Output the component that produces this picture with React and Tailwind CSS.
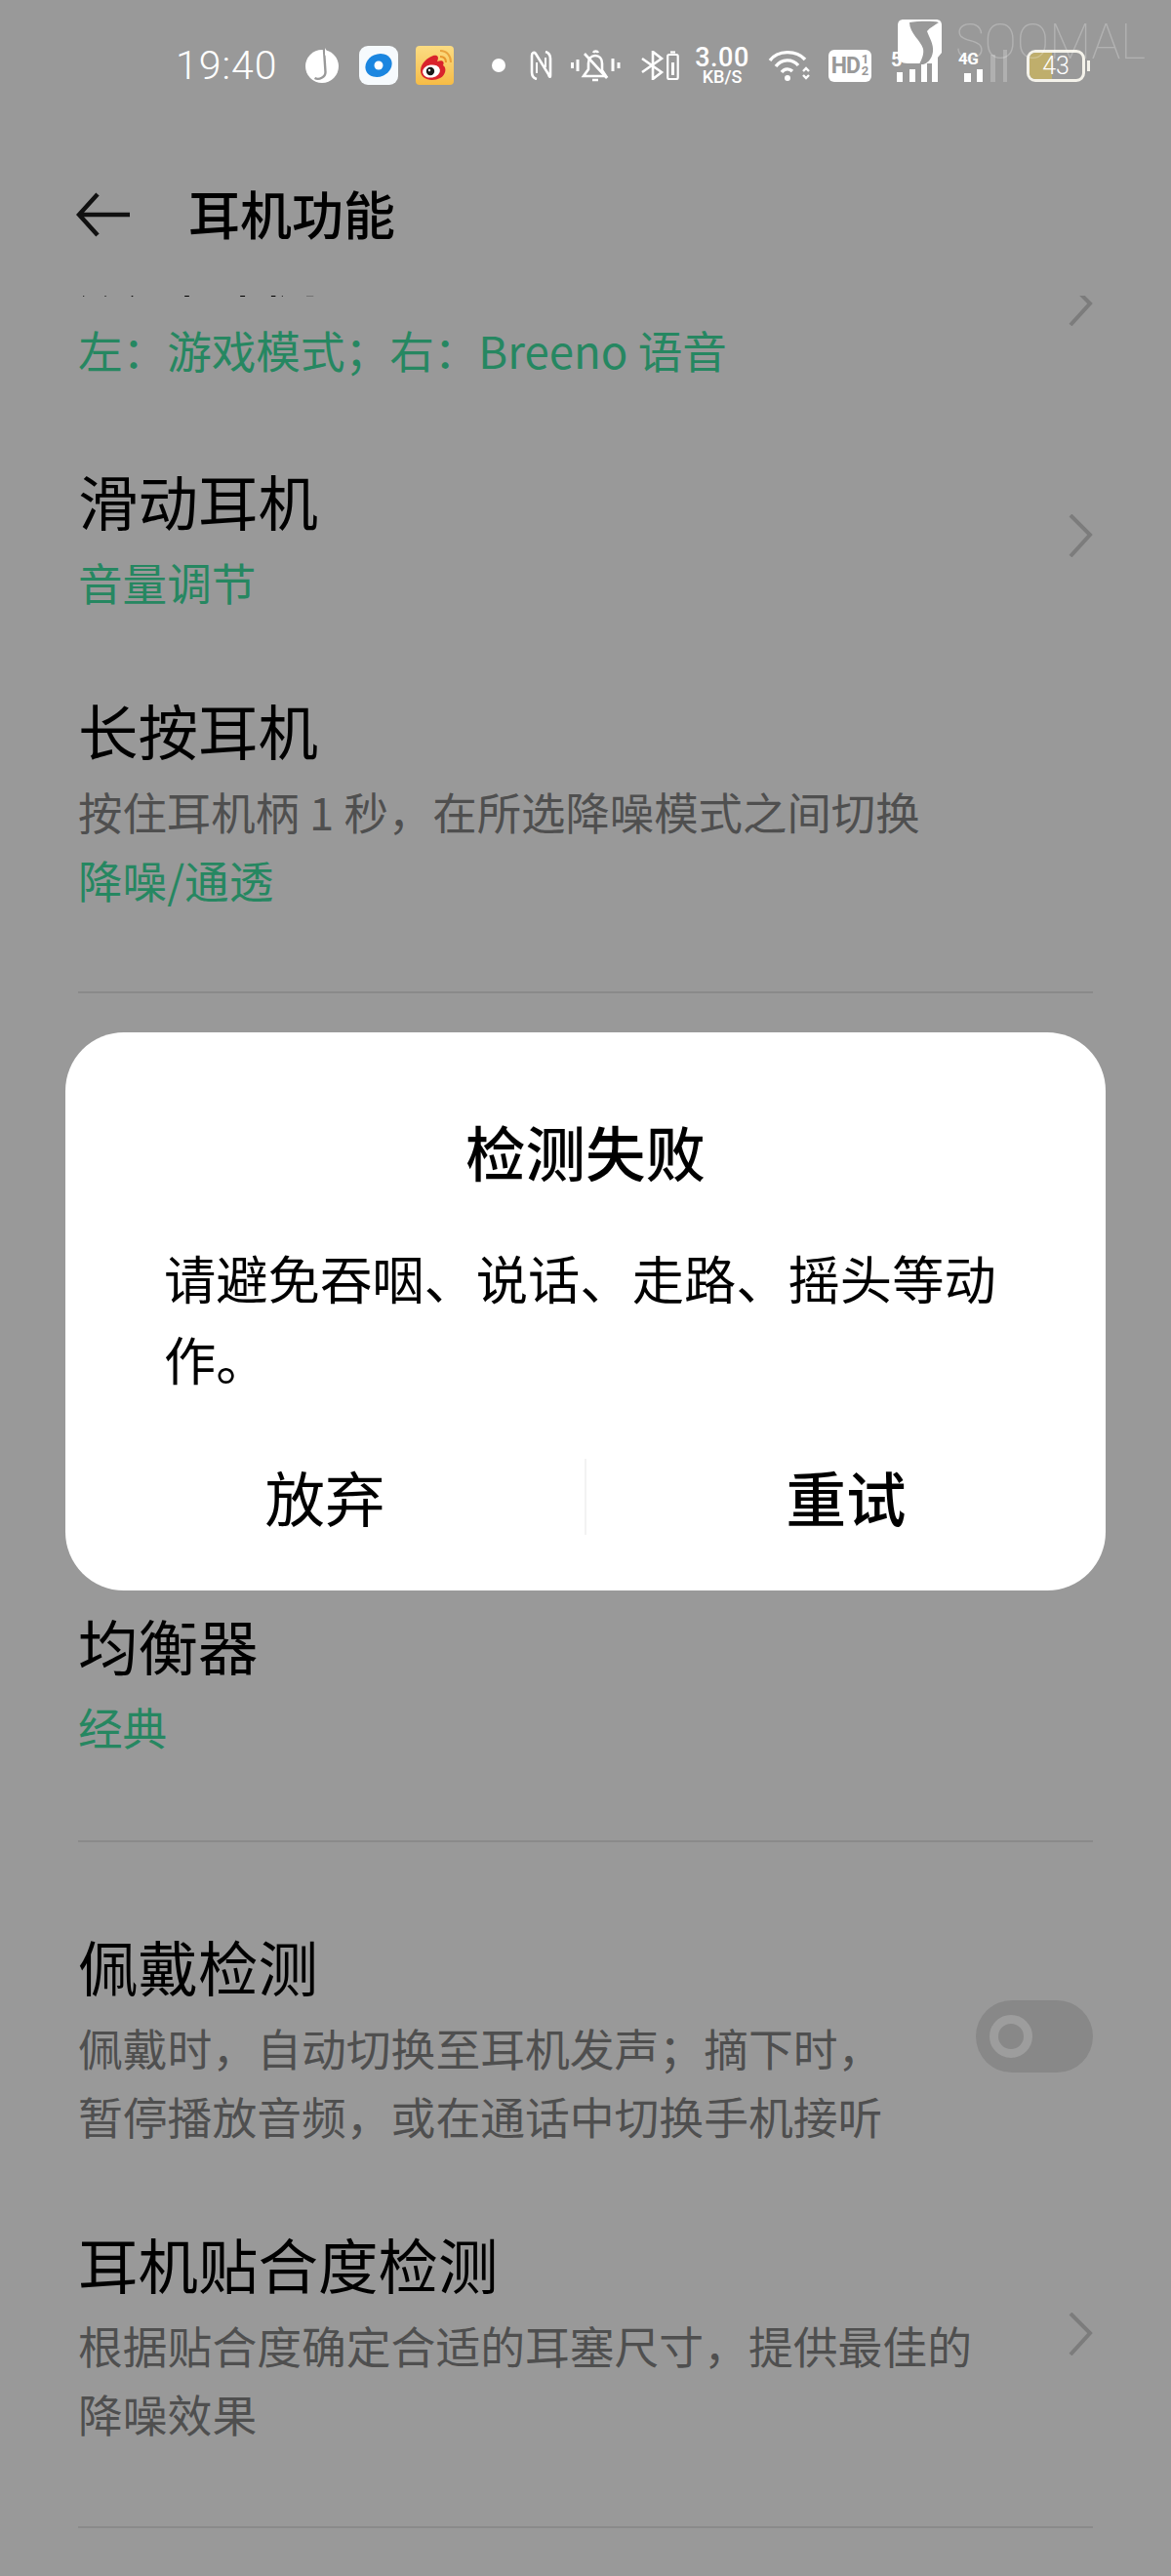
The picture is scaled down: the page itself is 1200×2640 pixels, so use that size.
import { Fragment } from 'react';

const CJK = "font-['Noto_Sans_CJK_SC','Noto_Sans',sans-serif]";

function Chevron({ className = '' }) {
  return (
    <svg viewBox="0 0 26 44" className={`w-[26px] h-[44px] shrink-0 ${className}`} fill="none" stroke="#7c7c7c" strokeWidth="4">
      <path d="M3 1 L23 21 L3 43" />
    </svg>
  );
}

function Title({ children }) {
  return <div className="text-[61.5px] leading-[82px] text-black">{children}</div>;
}

function Green({ children, className = 'mt-[7px]' }) {
  return <div className={`text-[45.6px] leading-[70px] text-[#268761] ${className}`}>{children}</div>;
}

function Sub({ lines, size = 'text-[45.8px]' }) {
  return (
    <div className={`mt-[7px] leading-[70px] text-[#4f4f4f] whitespace-nowrap ${size}`}>
      {lines.map((l, i) => (
        <Fragment key={i}>
          {l}
          {i < lines.length - 1 && <br />}
        </Fragment>
      ))}
    </div>
  );
}

function Divider({ className = '' }) {
  return <div className={`h-[2px] bg-[#8a8a8a] ${className}`} />;
}

function QQMusic() {
  return (
    <svg viewBox="0 0 36 36" className="w-[36px] h-[36px] shrink-0 ml-[32px]">
      <circle cx="18" cy="19" r="17" fill="#fff" />
      <path d="M20 2 L21.5 25 C21.5 30 15 33.5 10.5 31" fill="none" stroke="#999" strokeWidth="2.4" />
      <path d="M21 0 C23 5 28 7 28 12 C25 9 22 9 21 7 Z" fill="#fff" />
    </svg>
  );
}

function DiscTile() {
  return (
    <div className="w-[40px] h-[40px] shrink-0 ml-[20px] rounded-[9px] bg-[#f6fafd] flex items-center justify-center">
      <svg viewBox="0 0 30 30" className="w-[30px] h-[30px]">
        <ellipse cx="15" cy="15" rx="14" ry="11.5" transform="rotate(-25 15 15)" fill="#1b86e0" />
        <circle cx="15" cy="15" r="4.5" fill="#fff" />
      </svg>
    </div>
  );
}

function WeiboTile() {
  return (
    <div className="w-[39px] h-[40px] shrink-0 ml-[18px] rounded-[4px] bg-gradient-to-b from-[#fbdc82] to-[#f6bc45]">
      <svg viewBox="0 0 39 40" className="w-[39px] h-[40px]">
        <path d="M5 25 C5 18 12 12 18 10 C23 9 24 12 22 16 C27 14 30 16 28 20 C32 22 31 30 25 33 C17 37 5 35 5 25 Z" fill="#d9232c" />
        <ellipse cx="16" cy="26" rx="9" ry="6.5" transform="rotate(-10 16 26)" fill="#fff" />
        <circle cx="15" cy="26" r="4.2" fill="#1a1a1a" />
        <circle cx="14" cy="25" r="1.2" fill="#fff" />
        <path d="M25 11 C29 11 31 13 31 17" fill="none" stroke="#e9962c" strokeWidth="2" />
        <path d="M25 5 C32 5 36 10 36 17" fill="none" stroke="#e9a33c" strokeWidth="2" />
      </svg>
    </div>
  );
}

function NfcIcon() {
  return (
    <svg viewBox="0 0 23 30" className="w-[23px] h-[30px] shrink-0 ml-[25px]" fill="none" stroke="#fff" strokeWidth="2.6">
      <path d="M7 29 C3 28 2 26 2 22 V5 C2 2 4 1 6 3 L19 24 C20 27 21 28 21 25 V8 C21 4 19 2 16 1" />
      <path d="M7 23 V12 M16 7 V17" strokeWidth="2" />
    </svg>
  );
}

function MutedBell() {
  return (
    <svg viewBox="0 0 51 33" className="w-[51px] h-[33px] shrink-0 ml-[19px]" fill="none" stroke="#fff" strokeWidth="2.6">
      <path d="M1.5 13 V19 M7 10 V22 M43 9 V22 M49 13 V19" strokeWidth="3" />
      <path d="M13 27 H36 L32 21 V14 C32 9 29 6 25 6 C21 6 18 9 18 14 V20 Z" />
      <path d="M23 3 C24 1 27 1 28 3 M14 4 L37 29 M22 31 H28" />
    </svg>
  );
}

function BluetoothBattery() {
  return (
    <svg viewBox="0 0 39 30" className="w-[39px] h-[30px] shrink-0 ml-[21px]" fill="none" stroke="#fff" strokeWidth="2.6">
      <path d="M1 8 L21 22 L12 29 V1 L21 8 L1 22" />
      <rect x="27.2" y="4" width="10.5" height="25" rx="1.5" strokeWidth="2.2" />
      <path d="M30 1.5 H35" strokeWidth="2.2" />
      <path d="M32.5 12 V25" strokeWidth="3" />
    </svg>
  );
}

function Speed() {
  return (
    <div className="w-[56px] ml-[16px] shrink-0 flex flex-col items-center font-['Roboto',sans-serif] text-white font-medium">
      <div className="text-[27px] leading-[24px] tracking-[0.5px]">3.00</div>
      <div className="text-[18px] leading-[16px]">KB/S</div>
    </div>
  );
}

function Wifi() {
  return (
    <svg viewBox="0 0 43 32" className="w-[43px] h-[32px] shrink-0 ml-[19px]" fill="none" stroke="#fff" strokeWidth="3.4">
      <path d="M2 11 C10 0 29 0 38 10" />
      <path d="M8 17 C14 9 25 9 31 16" />
      <path d="M14 23 C17 19 22 19 25 22" />
      <circle cx="20" cy="29" r="3" fill="#fff" stroke="none" />
      <path d="M36 22 L39 19 L42 22 M36 26 L39 29 L42 26" strokeWidth="2.4" />
    </svg>
  );
}

function HdTile() {
  return (
    <div className="w-[44px] h-[33px] shrink-0 ml-[19px] rounded-[6px] bg-white flex items-center justify-center gap-[1px] font-['Roboto',sans-serif] font-bold text-[#999]">
      <span className="text-[23px] leading-none tracking-[-1px]">HD</span>
      <span className="flex flex-col text-[13px] leading-[12px] pl-[1px]">
        <span>1</span>
        <span>2</span>
      </span>
    </div>
  );
}

function SignalFive() {
  return (
    <div className="relative w-[48px] h-[33px] shrink-0 ml-[20px] font-['Roboto',sans-serif] font-bold text-white">
      <svg viewBox="0 0 48 33" className="w-[48px] h-[33px]" fill="#fff">
        <rect x="6" y="23" width="6" height="10" />
        <rect x="19" y="20" width="6" height="13" />
        <rect x="31" y="6" width="6" height="27" />
        <rect x="42" y="6" width="6" height="27" />
      </svg>
      <span className="absolute left-0 top-[1px] text-[20px] leading-[18px]">5</span>
    </div>
  );
}

function SignalFour() {
  return (
    <div className="relative w-[50px] h-[33px] shrink-0 ml-[21px] font-['Roboto',sans-serif] font-bold text-white">
      <svg viewBox="0 0 50 33" className="w-[50px] h-[33px]">
        <rect x="6" y="24" width="7" height="9" fill="#fff" />
        <rect x="19" y="20" width="6" height="13" fill="#fff" />
        <rect x="33" y="5" width="5" height="28" fill="#b0b0b0" />
        <rect x="46" y="0" width="5" height="33" fill="#b0b0b0" />
      </svg>
      <span className="absolute left-0 top-[2px] text-[17px] leading-[15px] tracking-[-0.5px]">4G</span>
    </div>
  );
}

function Battery() {
  return (
    <div className="flex items-center shrink-0 ml-[20px]">
      <div className="relative w-[60px] h-[33px] rounded-[9px] border-[3px] border-[#f4f2ea] overflow-hidden">
        <div className="h-full w-[23px] bg-[#bfae6c]" />
        <span className="absolute inset-0 flex items-center justify-center text-[25px] leading-none font-light text-white font-['Roboto',sans-serif]">43</span>
      </div>
      <div className="w-[3px] h-[11px] ml-[2px] bg-[#f4f2ea]" />
    </div>
  );
}

function Watermark() {
  return (
    <div className="absolute left-[920px] top-[20px] flex items-center">
      <svg viewBox="0 0 45 46" className="w-[45px] h-[46px]">
        <path d="M6 0 H39 C43 0 45 2 45 6 V34 L36 45 H10 C4 45 0 42 0 36 V6 C0 2 2 0 6 0 Z" fill="#fff" />
        <path d="M12 3 C20 2 34 1 42 3 C38 6 33 8 30 12 C32 18 37 25 36 33 C35 41 30 45 26 46 L22 46 C25 40 27 35 26 30 C24 22 12 14 12 3 Z" fill="#999" />
      </svg>
      <span className="ml-[14px] text-[50px] leading-[46px] font-thin text-white/25 font-['Roboto',sans-serif]">SOOMAL</span>
    </div>
  );
}

function StatusBar() {
  return (
    <div className="h-[134px] pl-[180px] flex items-center">
      <div className="w-[100px] shrink-0 text-[41px] leading-none font-light text-white font-['Roboto',sans-serif] tracking-[1px]">19:40</div>
      <QQMusic />
      <DiscTile />
      <WeiboTile />
      <div className="w-[14px] h-[14px] shrink-0 ml-[39px] rounded-full bg-white" />
      <NfcIcon />
      <MutedBell />
      <BluetoothBattery />
      <Speed />
      <Wifi />
      <HdTile />
      <SignalFive />
      <SignalFour />
      <Battery />
    </div>
  );
}

function Dialog() {
  return (
    <div className="absolute left-[67px] top-[1058px] w-[1066px] h-[572px] rounded-[60px] bg-white pt-[86px]">
      <div className="text-center text-[61.5px] leading-[72px] font-medium text-black">检测失败</div>
      <div className="mt-[51px] pl-[101px] pr-[103px] text-[53.3px] leading-[83px] text-black">
        请避免吞咽、说话、走路、摇头等动作。
      </div>
      <div className="mt-[62px] h-[78px] flex items-center text-[61.5px] text-black">
        <div className="flex-1 text-center">放弃</div>
        <div className="w-[2px] h-full bg-[#f3f3f3]" />
        <div className="flex-1 text-center font-medium">重试</div>
      </div>
    </div>
  );
}

export default function App() {
  return (
    <div className={`relative w-[1200px] h-[2640px] overflow-hidden bg-[#999999] ${CJK}`}>
      <StatusBar />

      {/* Header */}
      <div className="h-[169px] pt-[3px] pl-[78px] flex items-center">
        <svg viewBox="0 0 56 46" className="w-[56px] h-[46px] shrink-0" fill="none" stroke="#111" strokeWidth="4.5">
          <path d="M22 2 L3 23 L22 44 M3 23 H55" />
        </svg>
        <h1 className="ml-[59px] -mt-[4px] text-[53px] leading-none font-medium text-black">耳机功能</h1>
      </div>

      {/* Settings list, scrolled so the first row is cut off under the header */}
      <div className="h-[2337px] overflow-hidden px-[80px]">
        <div className="-mt-[71px] flex items-center justify-between">
          <div>
            <Title>双击耳机</Title>
            <Green className="mt-[9px]">左：游戏模式；右：Breeno 语音</Green>
          </div>
          <Chevron className="-mt-[2px]" />
        </div>

        <div className="mt-[79px] flex items-center justify-between">
          <div>
            <Title>滑动耳机</Title>
            <Green>音量调节</Green>
          </div>
          <Chevron className="-mt-[6px]" />
        </div>

        <div className="mt-[76px]">
          <Title>长按耳机</Title>
          <Sub lines={['按住耳机柄 1 秒，在所选降噪模式之间切换']} size="text-[45.4px]" />
          <Green className="mt-0">降噪/通透</Green>
        </div>

        <Divider className="mt-[80px]" />

        {/* Rows hidden behind the dialog */}
        <div className="h-[627px]" />

        <Title>均衡器</Title>
        <Green>经典</Green>

        <Divider className="mt-[82px]" />

        <div className="mt-[86px] flex items-center justify-between">
          <div>
            <Title>佩戴检测</Title>
            <Sub lines={['佩戴时，自动切换至耳机发声；摘下时，', '暂停播放音频，或在通话中切换手机接听']} />
          </div>
          <div className="-mt-[4px] w-[120px] h-[74px] rounded-full bg-[#888888] pl-[14px] flex items-center">
            <div className="w-[44px] h-[44px] rounded-full border-[9px] border-[#9d9d9d]" />
          </div>
        </div>

        <div className="mt-[76px] flex items-center justify-between">
          <div>
            <Title>耳机贴合度检测</Title>
            <Sub lines={['根据贴合度确定合适的耳塞尺寸，提供最佳的', '降噪效果']} />
          </div>
          <Chevron className="-mt-[4px]" />
        </div>

        <Divider className="mt-[81px]" />
      </div>

      <Watermark />
      <Dialog />
    </div>
  );
}
